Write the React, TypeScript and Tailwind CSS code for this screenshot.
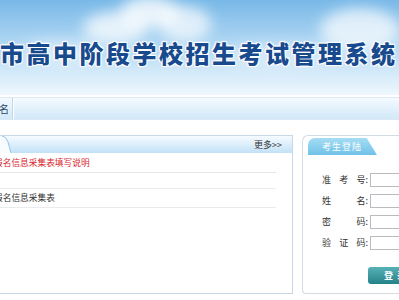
import React from 'react';

const loginFields: string[][] = [
  ['准', '考', '号:'],
  ['姓', '名:'],
  ['密', '码:'],
  ['验', '证', '码:'],
];

const notices = [
  { title: '报名信息采集表填写说明', red: true },
  { title: '报名信息采集表', red: false },
];

const Clouds: React.FC = () => (
  <svg className="absolute inset-0" width="399" height="95" viewBox="0 0 399 95">
    <defs>
      <filter id="blur" x="-50%" y="-50%" width="200%" height="200%">
        <feGaussianBlur stdDeviation="7" />
      </filter>
    </defs>
    <g fill="#ffffff" filter="url(#blur)">
      <ellipse cx="115" cy="28" rx="32" ry="16" opacity="0.75" />
      <ellipse cx="150" cy="12" rx="30" ry="16" opacity="0.8" />
      <ellipse cx="185" cy="24" rx="26" ry="18" opacity="0.7" />
      <ellipse cx="60" cy="52" rx="40" ry="12" opacity="0.45" />
      <ellipse cx="360" cy="30" rx="40" ry="22" opacity="0.7" />
      <ellipse cx="280" cy="55" rx="60" ry="12" opacity="0.35" />
    </g>
  </svg>
);

const App: React.FC = () => {
  return (
    <div className="w-[399px] h-[300px] overflow-hidden bg-white font-['Noto_Sans_CJK_SC','Noto_Sans',sans-serif]">
      {/* cabecera */}
      <div className="relative h-[95px] overflow-hidden bg-linear-to-b from-[#78b8e7] via-[#b5daf4] to-[#eef7fd]">
        <Clouds />
        <div className="relative pt-[40px] pl-0 whitespace-nowrap text-[24px] leading-[26px] font-black tracking-[2.5px] text-[#184a8e] [text-shadow:0_0_2px_#fff,1px_1px_1px_#fff,-1px_-1px_1px_#fff,1px_-1px_1px_#fff,-1px_1px_1px_#fff]">
          市高中阶段学校招生考试管理系统
        </div>
      </div>

      {/* menu */}
      <div className="mt-[2px] h-[23px] flex items-stretch border-y border-[#dbe9f4] bg-linear-to-b from-[#f4faff] to-[#d2e8f8]">
        <div className="flex items-center text-[10px] text-[#2a4668] -ml-[1px]">名</div>
        <div className="ml-[3px] w-px bg-[#c3d7e8]" />
        <div className="w-px bg-white" />
      </div>

      {/* contenido */}
      <div className="mt-[15px] flex gap-[9px] items-start">
        <div className="shrink-0 w-[293px] h-[159px] border border-l-0 border-[#c8d8e6] bg-white">
          <div className="relative h-[17px] flex items-center justify-end bg-linear-to-b from-[#f5fbff] to-[#c3e1f6]">
            <svg className="absolute left-0 top-0" width="12" height="17" viewBox="0 0 12 17">
              <path d="M0 0 L2 0 Q6 0 8 6 L11 17 L0 17 Z" fill="#f8fcff" />
              <path d="M2 0 Q6 0 8 6 L11 17" fill="none" stroke="#8fc2e6" strokeWidth="1" />
            </svg>
            <span className="pr-[10px] text-[9px] text-[#333]">更多&gt;&gt;</span>
          </div>
          <div className="pr-[16px]">
            <div className="h-[20px] flex items-center border-b border-[#e4e8ec]">
              <span className={`-ml-[6px] text-[8.7px] whitespace-nowrap ${notices[0].red ? 'text-[#d8262e]' : 'text-[#333]'}`}>
                {notices[0].title}
              </span>
            </div>
            <div className="mt-[15px] h-[20px] flex items-center border-y border-[#e8ecef]">
              <span className={`-ml-[6px] text-[8.7px] whitespace-nowrap ${notices[1].red ? 'text-[#d8262e]' : 'text-[#333]'}`}>
                {notices[1].title}
              </span>
            </div>
          </div>
        </div>

        <div className="flex-1 min-w-0 overflow-hidden h-[159px] border border-r-0 border-[#d3dbe3] rounded-tl-[6px] rounded-bl-[4px] bg-white">
          <div className="pt-[2px] pl-[5px]">
            <div className="w-[69px] h-[17px] flex items-center pl-[14px] rounded-tl-[7px] bg-linear-to-b from-[#a5dcf3] to-[#6fc2e8] [clip-path:polygon(0_0,85%_0,100%_100%,0_100%)]">
              <span className="text-[9px] tracking-[1px] text-white">考生登陆</span>
            </div>
          </div>
          <div className="mt-[18px] flex flex-col gap-[7px]">
            {loginFields.map((chars, i) => (
              <div key={i} className="flex items-center h-[14px]">
                <div className="shrink-0 ml-[19px] w-[46px] flex justify-between text-[9px] text-[#333]">
                  {chars.map((c, j) => (
                    <span key={j}>{c}</span>
                  ))}
                </div>
                <input className="shrink-0 ml-[2px] w-[60px] h-[14px] border border-[#b8bcc0] bg-white outline-none" readOnly />
              </div>
            ))}
          </div>
          <div className="mt-[10px] ml-[65px]">
            <button
              type="button"
              className="w-[60px] h-[17px] rounded-[3px] bg-linear-to-b from-[#56b2b5] to-[#22828a] text-white text-[9px] font-bold tracking-[4px] pl-[16px] text-left"
            >
              登录
            </button>
          </div>
        </div>
      </div>
    </div>
  );
};

export default App;
